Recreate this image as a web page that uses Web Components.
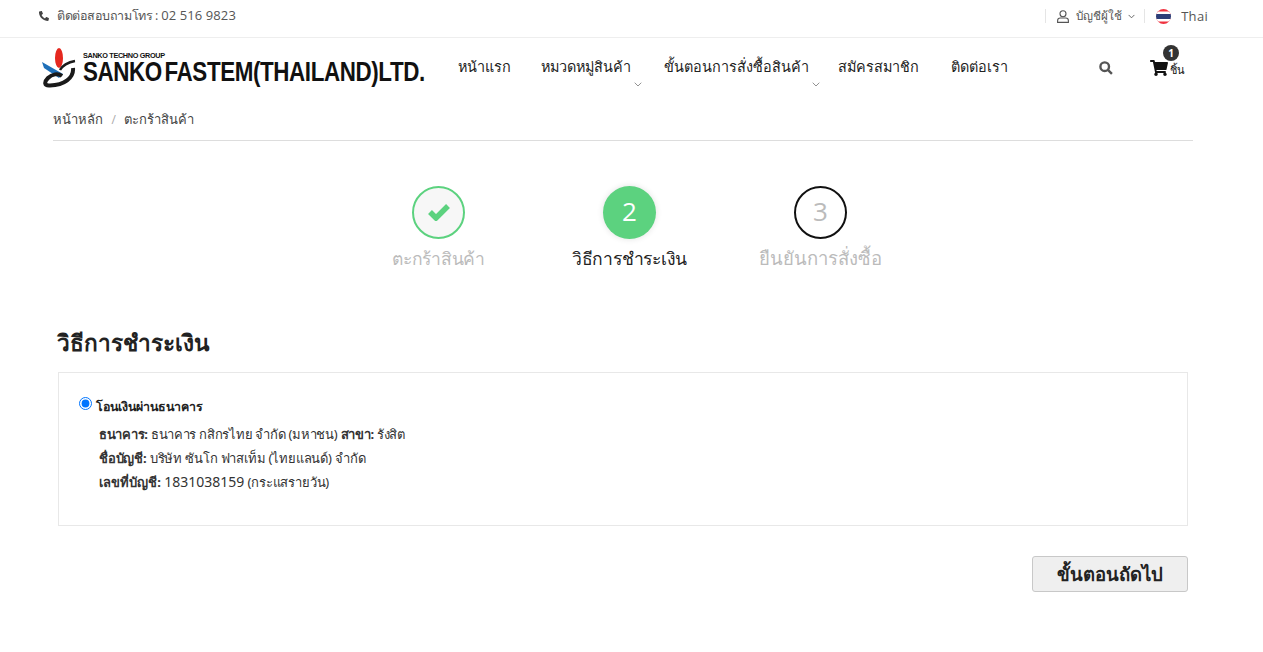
<!DOCTYPE html>
<html lang="th"><head><meta charset="utf-8"><title>Sanko</title>
<style>
html,body{margin:0;padding:0;background:#fff}
body{font-family:"Open Sans","Noto Sans",sans-serif;color:#222;height:652px;overflow:hidden}
</style></head><body>
<template id="t-top"><style>
:host{display:flex;align-items:center;justify-content:space-between;padding:0 55px 5px 39px;box-sizing:content-box;height:32px;border-bottom:1px solid #eee;font-size:13px;color:#555}
.l,.r{display:flex;align-items:center}
.l svg{margin-right:8px}
.t{font-size:12.500px;letter-spacing:-.45px}
.num{letter-spacing:.1px}
.acc{display:flex;align-items:center;box-sizing:border-box;width:100px;border-left:1px solid #e5e5e5;border-right:1px solid #e5e5e5;padding:0 0 0 11px;height:14px;font-size:11.700px}
.acc span{margin:0 6px 0 7px;width:46px;white-space:nowrap}
.lang{display:flex;align-items:center;gap:10px;margin-left:11px;letter-spacing:.3px}
</style><div class="l"><svg width="10" height="10" viewBox="0 0 512 512"><path fill="#444" d="M493 24l-104-24c-11-3-23 3-27 14l-48 112c-4 10-1 21 7 28l61 50c-36 76-98 139-175 175l-50-61c-7-8-18-11-28-7L17 359c-11 5-17 16-14 28l24 104c3 11 12 19 23 19 256 0 464-207 464-464 0-11-8-20-21-22z" transform="matrix(-1 0 0 1 512 0)"/></svg><span><span class="t">ติดต่อสอบถามโทร :</span> <span class="num">02 516 9823</span></span></div>
<div class="r"><div class="acc"><svg width="12" height="13" viewBox="0 0 12 13" fill="none" stroke="#555" stroke-width="1.100"><circle cx="6" cy="3.700" r="3"/><path d="M.6 12.400v-1.700c0-1.700 1.200-2.700 2.700-2.700h5.400c1.500 0 2.700 1 2.700 2.700v1.700z"/></svg><span>บัญชีผู้ใช้</span><svg width="7" height="5" viewBox="0 0 8 5" fill="none" stroke="#555"><path d="M.7.7 4 4 7.300.7"/></svg></div>
<div class="lang"><svg width="15" height="15" viewBox="0 0 15 15"><defs><clipPath id="c"><circle cx="7.500" cy="7.500" r="7.500"/></clipPath></defs><g clip-path="url(#c)"><rect width="15" height="15" fill="#ef3340"/><rect y="2.500" width="15" height="10" fill="#fff"/><rect y="5" width="15" height="5" fill="#2d3e78"/></g></svg><span>Thai</span></div></div></template>
<template id="t-nav"><style>
:host{display:flex;height:59px;padding:0 0 0 42px;position:relative}
.logo{width:384px;height:40px;margin-top:10px;display:flex;align-items:flex-start;flex:none}
.mark{flex:none}
.txt{margin-left:7px;color:#111;font-family:"Liberation Sans",sans-serif;white-space:nowrap;width:343px}
.s{font-size:7.300px;font-weight:700;letter-spacing:-.35px;line-height:6px;margin-top:5px}
.b{display:inline-block;font-size:28px;font-weight:700;line-height:20px;letter-spacing:-.5px;word-spacing:-4px;margin-top:3px;transform-origin:left top;transform:scaleX(.8)}
nav{display:flex;margin-left:32px;font-size:14.400px;font-weight:500;color:#222;gap:30.500px;align-items:flex-start;padding-top:19px}
nav a{display:block;position:relative;line-height:20px;white-space:nowrap}
nav a:nth-child(2){margin:0 2.500px 0 -1px}
nav a:nth-child(3){margin-right:-1px}
nav a:nth-child(4){margin-right:1px}
nav svg{position:absolute;right:-11px;top:25px}
.icons{position:absolute;left:1099px;top:0;height:59px}
.s1{position:absolute;left:0;top:23px}
.cart{position:absolute;left:51px;top:22px}
.badge{position:absolute;left:64px;top:7px;width:16px;height:16px;border-radius:50%;background:#333;color:#fff;font-size:10px;font-weight:700;line-height:16px;text-align:center}
.unit{position:absolute;left:71px;top:24px;font-size:11px;font-weight:500;line-height:16px;color:#111;white-space:nowrap}
</style>
<div class="logo"><svg class="mark" width="34" height="40" viewBox="0 0 34 40" fill="none"><ellipse cx="17" cy="10" rx="4" ry="10" fill="#e5281f"/><path d="M0 14 21 26 17 30 2 20z" fill="#1e6fb8"/><path d="M33 13C26 14 20 18 18 22" stroke="#1a1a1a" stroke-width="2.500"/><path d="M31 20C32 30 22 37 8 37.500 2 38 2 34 6 30 10 26 16 25 20 28" stroke="#1a1a1a" stroke-width="4"/></svg><div class="txt"><div class="s">SANKO TECHNO GROUP</div><div class="b">SANKO FASTEM(THAILAND)LTD.</div></div></div>
<nav><a>หน้าแรก</a><a>หมวดหมู่สินค้า<svg width="8" height="5" viewBox="0 0 8 5" fill="none" stroke="#777" stroke-width=".8"><path d="M.7.7 4 4 7.300.7"/></svg></a><a>ขั้นตอนการสั่งซื้อสินค้า<svg width="8" height="5" viewBox="0 0 8 5" fill="none" stroke="#777" stroke-width=".8"><path d="M.7.7 4 4 7.300.7"/></svg></a><a>สมัครสมาชิก</a><a>ติดต่อเรา</a></nav>
<div class="icons"><svg class="s1" width="14" height="14" viewBox="0 0 13 13" fill="none" stroke="#555" stroke-width="2.200"><circle cx="5.300" cy="5.300" r="4"/><path d="M8.500 8.500 12 12"/></svg>
<svg class="cart" width="18" height="16" viewBox="0 0 576 512"><path fill="#111" d="M528 301l47-208c3-15-8-29-23-29H159l-9-47C148 7 138 0 127 0H24C11 0 0 11 0 24v16c0 13 11 24 24 24h70l70 343c-17 10-28 28-28 49 0 31 25 56 56 56s56-25 56-56c0-16-6-30-17-40h210c-11 10-17 24-17 40 0 31 25 56 56 56s56-25 56-56c0-22-13-41-32-50l5-24c3-15-8-29-23-29H213l-7-32h299c11 0 21-8 23-19z"/></svg><span class="badge">1</span><span class="unit">ชิ้น</span></div></template>
<template id="t-crumb"><style>
:host{display:block;margin:0 70px 0 53px;height:43px;border-bottom:1px solid #ddd;font-size:13px;line-height:44px;color:#444}
i{font-style:normal;color:#aaa;margin:0 8.500px;font-size:12px}
</style><span>หน้าหลัก</span><i>/</i><span>ตะกร้าสินค้า</span></template>
<template id="t-steps"><style>
:host{display:flex;justify-content:center;margin-top:45px;height:140px;padding-right:4px}
</style><slot></slot></template>
<template id="t-step"><style>
:host{display:flex;flex-direction:column;align-items:center;width:191px;font-size:17.500px;line-height:26px;color:#bbb;letter-spacing:-.27px}
.c{width:53px;height:53px;border-radius:50%;box-sizing:border-box;display:flex;align-items:center;justify-content:center;font-size:26px;margin-bottom:6px;letter-spacing:0;padding-bottom:4px}
:host([state=done]) .c{border:2px solid #5cd27f;background:#f7f7f7;padding-bottom:2px}
:host([state=active]) .c{background:#5cd27f;color:#fff;box-shadow:0 0 6px rgba(0,0,0,.12)}
:host([state=active]){color:#222}
:host([state=todo]) .c{border:2px solid #111;color:#bbb}
:host([state=todo]) span{font-size:18.500px;letter-spacing:0}
</style><div class="c"><slot name="i"></slot></div><span><slot></slot></span></template>
<template id="t-pay"><style>
:host{display:block;margin:0 75px 0 58px}
h2{margin:0 0 0 -1px;padding-top:1px;font-size:22.600px;font-weight:600;line-height:31px;color:#222}
.box{margin-top:14px;height:154px;border:1px solid #e8e8e8;box-sizing:border-box;padding:21px 20px;font-family:"Noto Sans","Open Sans",sans-serif;font-size:13px;color:#333}
.r{display:flex;align-items:center;font-weight:700;font-size:12.400px;height:20px;color:#222}
.r span{position:relative;top:2px}
input{margin:-2px 4px 0 0;width:13px;height:13px;accent-color:#0075ff}
.d{margin:8px 0 0 20px;line-height:24px;font-size:13px;letter-spacing:-.28px}
.d div+div{letter-spacing:-.19px}
.d div:last-child b{letter-spacing:.05px}
.n{font-size:14px;letter-spacing:0}
b{font-weight:700}
.f{display:flex;justify-content:flex-end;margin-top:30px}
button{width:156px;height:36px;background:#efefef;border:1px solid #c8c8c8;border-radius:3px;font:600 18.500px/1 "Open Sans","Noto Sans",sans-serif;color:#222;padding:0}
</style><h2>วิธีการชำระเงิน</h2><div class="box"><label class="r"><input type="radio" checked><span>โอนเงินผ่านธนาคาร</span></label>
<div class="d"><div><b>ธนาคาร:</b> ธนาคาร กสิกรไทย จำกัด (มหาชน) <b>สาขา:</b> รังสิต</div><div><b>ชื่อบัญชี:</b> บริษัท ซันโก ฟาสเท็ม (ไทยแลนด์) จำกัด</div><div><b>เลขที่บัญชี:</b> <span class="n">1831038159</span> (กระแสรายวัน)</div></div></div><div class="f"><button>ขั้นตอนถัดไป</button></div></template>
<s-top></s-top><s-nav></s-nav><s-crumb></s-crumb>
<s-steps><s-step state="done"><svg slot="i" width="24" height="18" viewBox="0 0 24 18"><path d="M3 9l6 6L21 3" fill="none" stroke="#5cd27f" stroke-width="5.500"/></svg>ตะกร้าสินค้า</s-step><s-step state="active"><span slot="i">2</span>วิธีการชำระเงิน</s-step><s-step state="todo"><span slot="i">3</span>ยืนยันการสั่งซื้อ</s-step></s-steps>
<s-pay></s-pay>
<script>
for(const [n,t] of [['s-top','t-top'],['s-nav','t-nav'],['s-crumb','t-crumb'],['s-steps','t-steps'],['s-step','t-step'],['s-pay','t-pay']]){
customElements.define(n,class extends HTMLElement{constructor(){super();this.attachShadow({mode:'open'}).appendChild(document.getElementById(t).content.cloneNode(true));}});}
</script></body></html>
